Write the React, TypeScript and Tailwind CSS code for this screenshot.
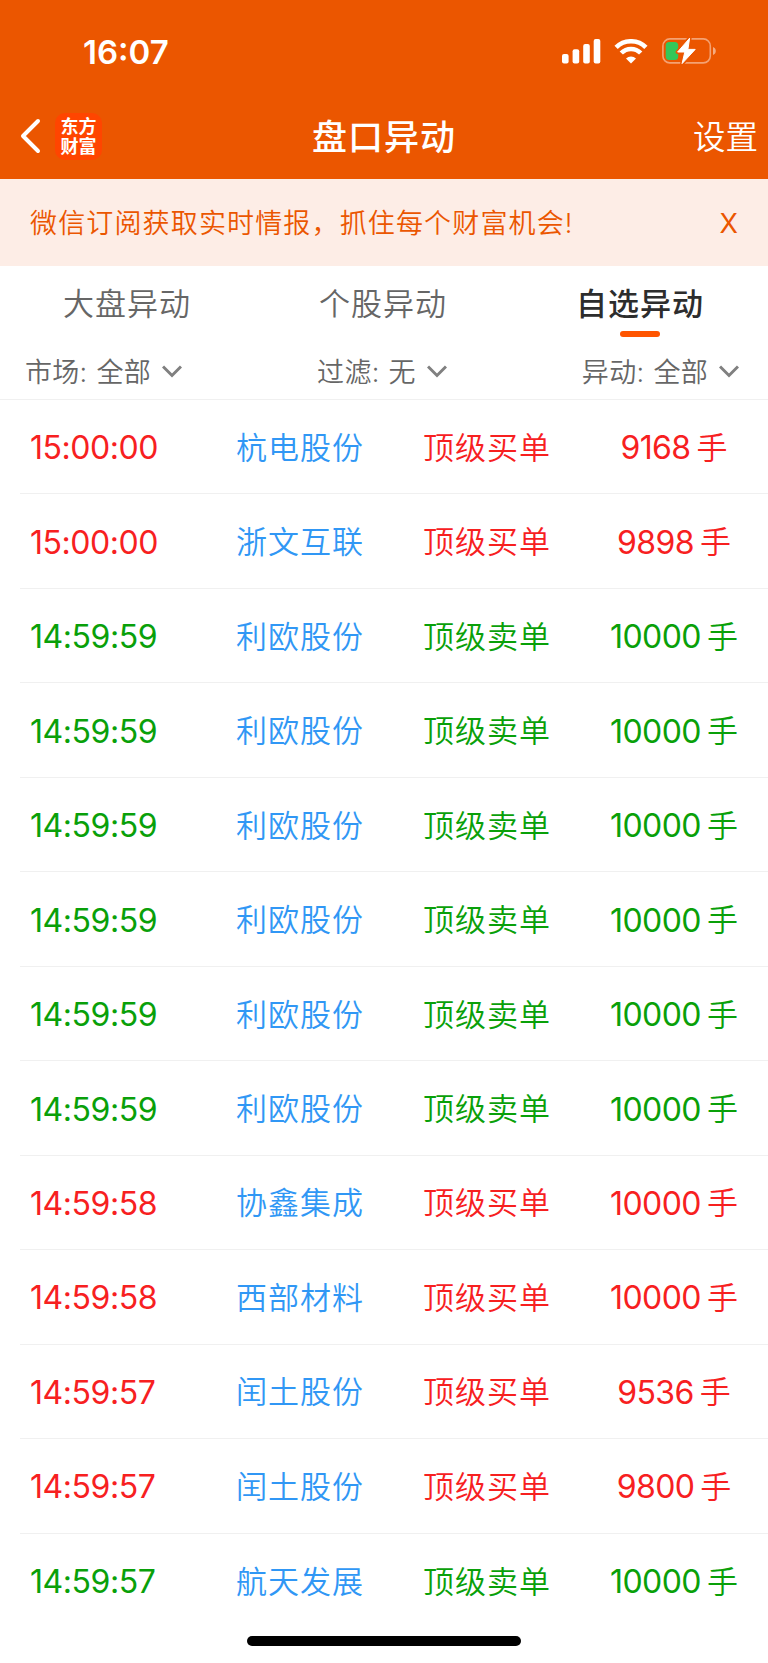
import { useState } from 'react';

interface Order {
  time: string;
  name: string;
  side: 'buy' | 'sell';
  volume: number;
}

const orders: Order[] = [
  { time: '15:00:00', name: '杭电股份', side: 'buy', volume: 9168 },
  { time: '15:00:00', name: '浙文互联', side: 'buy', volume: 9898 },
  { time: '14:59:59', name: '利欧股份', side: 'sell', volume: 10000 },
  { time: '14:59:59', name: '利欧股份', side: 'sell', volume: 10000 },
  { time: '14:59:59', name: '利欧股份', side: 'sell', volume: 10000 },
  { time: '14:59:59', name: '利欧股份', side: 'sell', volume: 10000 },
  { time: '14:59:59', name: '利欧股份', side: 'sell', volume: 10000 },
  { time: '14:59:59', name: '利欧股份', side: 'sell', volume: 10000 },
  { time: '14:59:58', name: '协鑫集成', side: 'buy', volume: 10000 },
  { time: '14:59:58', name: '西部材料', side: 'buy', volume: 10000 },
  { time: '14:59:57', name: '闰土股份', side: 'buy', volume: 9536 },
  { time: '14:59:57', name: '闰土股份', side: 'buy', volume: 9800 },
  { time: '14:59:57', name: '航天发展', side: 'sell', volume: 10000 },
];

const tabs = ['大盘异动', '个股异动', '自选异动'];

function StatusBar() {
  return (
    <div className="flex h-[102px] items-center justify-between pr-[52px] pl-[83px] text-white">
      <span className="pt-[2px] text-[33px] leading-none font-semibold">16:07</span>
      <div className="flex items-center">
        <svg width="39" height="25" viewBox="0 0 39 25" fill="currentColor">
          <rect x="0" y="15" width="6.6" height="9.5" rx="2" />
          <rect x="10.6" y="10.2" width="6.6" height="14.3" rx="2" />
          <rect x="21.2" y="5" width="6.6" height="19.5" rx="2" />
          <rect x="31.7" y="0" width="6.6" height="24.5" rx="2" />
        </svg>
        <svg className="ml-[13px]" width="34" height="25" viewBox="0 0 34 25" fill="none" stroke="currentColor" strokeWidth="4.6">
          <path d="M2.1 8.4a21.2 21.2 0 0 1 29.8 0" />
          <path d="M7.3 14a13.6 13.6 0 0 1 19.4 0" />
          <path d="M17 24.4l-5-5a7.2 7.2 0 0 1 10 0z" fill="currentColor" stroke="none" />
        </svg>
        <svg className="ml-[14px]" width="54" height="28" viewBox="0 0 54 28">
          <rect x="0.9" y="1.9" width="47.4" height="24" rx="7" fill="none" stroke="#fff" strokeOpacity="0.45" strokeWidth="1.6" />
          <path d="M51 10v8c1.8-.7 2.8-2.2 2.8-4s-1-3.3-2.8-4z" fill="#fff" fillOpacity="0.5" />
          <rect x="3.7" y="5" width="12.5" height="18" rx="3.5" fill="#34c759" />
          <path d="M27.6 1.2L15.6 15h7.2l-2.7 11.6L33.2 12.4h-7.3z" fill="#fff" stroke="#eb5600" strokeWidth="4" strokeLinejoin="round" />
          <path d="M27.6 1.2L15.6 15h7.2l-2.7 11.6L33.2 12.4h-7.3z" fill="#fff" stroke="#fff" strokeWidth="1" strokeLinejoin="round" />
        </svg>
      </div>
    </div>
  );
}

function Header() {
  return (
    <header className="grid h-[77px] grid-cols-[1fr_auto_1fr] items-center px-[10px] pb-[9px] text-white">
      <div className="flex items-center pl-[10px]">
        <svg width="21" height="36" viewBox="0 0 21 36" fill="none" stroke="currentColor" strokeWidth="4" strokeLinecap="round" strokeLinejoin="round">
          <path d="M18 3L3 18l15 15" />
        </svg>
        <div className="ml-[14px] flex h-[47px] w-[47px] items-center justify-center rounded-[10px] bg-[#ff4500]">
          <span className="w-[36px] pb-[1px] font-['Noto_Sans_CJK_SC',sans-serif] text-[18px] leading-[19.5px] font-bold">东方财富</span>
        </div>
      </div>
      <h1 className="pt-[2px] text-center text-[35px] leading-none font-medium tracking-[1px] whitespace-nowrap">盘口异动</h1>
      <button className="justify-self-end pb-[2px] font-['Noto_Sans_CJK_SC',sans-serif] text-[32.5px] leading-none font-[350]">设置</button>
    </header>
  );
}

function Filter({ label, value }: { label: string; value: string }) {
  return (
    <button className="flex items-center text-[27px] leading-none font-[350] tracking-[0.3px] text-[#666]">
      <span>{label}:</span>
      <span className="ml-[9px]">{value}</span>
      <svg className="mb-[2px] ml-[11px]" width="20" height="13" viewBox="0 0 20 13" fill="none" stroke="#808080" strokeWidth="3">
        <path d="M1 1.5l9 9 9-9" />
      </svg>
    </button>
  );
}

function OrderRow({ order }: { order: Order }) {
  const color = order.side === 'buy' ? 'text-[#f7201f]' : 'text-[#09a009]';

  return (
    <li className={`ml-[20px] flex h-[94.47px] items-center border-b border-[#f0f0f0] pt-[1px] text-[31px] leading-none font-[350] last:border-b-0 ${color}`}>
      <span className="w-[216px] pt-[2px] pl-[10px] text-[32px] font-normal tracking-[-0.45px]">{order.time}</span>
      <span className="w-[187px] tracking-[1px] text-[#3097f5]">{order.name}</span>
      <span className="w-[155px] tracking-[1px]">{order.side === 'buy' ? '顶级买单' : '顶级卖单'}</span>
      <span className="flex w-[189px] items-center justify-center pl-[3px]">
        <span className="pt-[2px] text-[32px] font-normal tracking-[-0.6px]">{order.volume}</span>
        <span className="ml-[6px]">手</span>
      </span>
    </li>
  );
}

export default function App() {
  const [activeTab, setActiveTab] = useState('自选异动');
  const [showNotice, setShowNotice] = useState(true);

  return (
    <div className="flex h-[1663px] w-[768px] flex-col overflow-hidden bg-white font-[Inter,'Noto_Sans_CJK_SC',sans-serif]">
      <div className="bg-[#eb5600]">
        <StatusBar />
        <Header />
      </div>

      {showNotice && (
        <div className="flex h-[87px] shrink-0 items-center justify-between bg-[#fdede6] pt-[1px] pr-[30px] pl-[30px] text-[#eb5600]">
          <p className="text-[27px] leading-none font-[350] tracking-[1.15px]">微信订阅获取实时情报，抓住每个财富机会!</p>
          <button className="text-[27px] leading-none" onClick={() => setShowNotice(false)}>X</button>
        </div>
      )}

      {/* Tabs */}
      <nav className="grid h-[73px] shrink-0 grid-cols-3">
        {tabs.map((tab) => (
          <button key={tab} onClick={() => setActiveTab(tab)} className="flex flex-col items-center pt-[22px]">
            <span className={`text-[31px] leading-none tracking-[1px] ${tab === activeTab ? 'font-medium text-[#2d2d2d]' : 'pr-[2px] font-[350] text-[#666]'}`}>{tab}</span>
            {tab === activeTab && <span className="mt-[12px] h-[6px] w-[40px] rounded-full bg-[#ff5500]" />}
          </button>
        ))}
      </nav>

      <div className="flex h-[61px] shrink-0 items-center justify-between border-b border-[#f0f0f0] pt-[6px] pr-[29px] pl-[25px]">
        <Filter label="市场" value="全部" />
        <Filter label="过滤" value="无" />
        <Filter label="异动" value="全部" />
      </div>

      <ul>
        {orders.map((order, index) => (
          <OrderRow key={index} order={order} />
        ))}
      </ul>

      {/* Home indicator */}
      <div className="mt-[8px] h-[10px] w-[274px] shrink-0 self-center rounded-full bg-black" />
    </div>
  );
}
